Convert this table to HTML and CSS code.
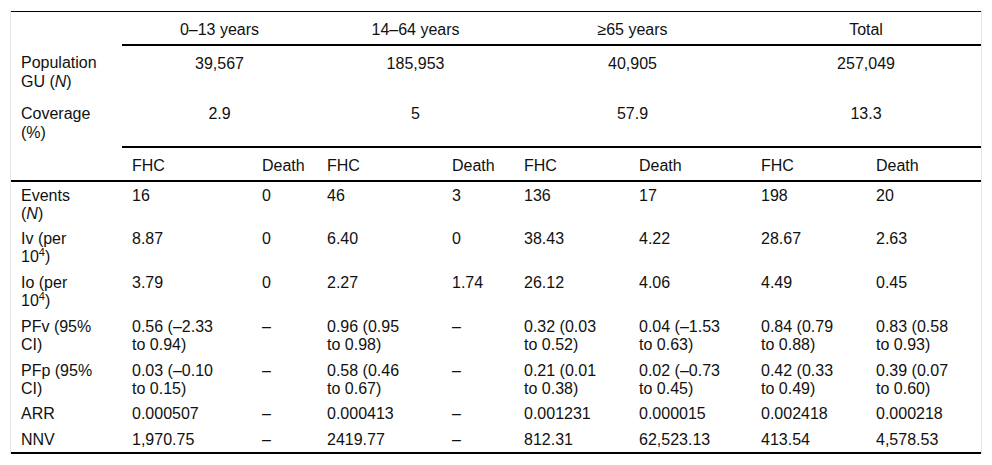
FILE: index.html
```html
<!DOCTYPE html>
<html lang="en">
<head>
<meta charset="utf-8">
<title>Table</title>
<link rel="stylesheet" href="styles.css">
</head>
<body>
<div class="wrap">
<table class="data">
<colgroup>
<col class="c0"><col class="c1"><col class="c2"><col class="c3"><col class="c4"><col class="c5"><col class="c6"><col class="c7"><col class="c8">
</colgroup>
<thead>
<tr class="group">
<th class="stub"></th>
<th colspan="2">0–13 years</th>
<th colspan="2">14–64 years</th>
<th colspan="2">≥65 years</th>
<th colspan="2">Total</th>
</tr>
<tr class="info">
<th class="stub">Population<br>GU (<i>N</i>)</th>
<td colspan="2">39,567</td>
<td colspan="2">185,953</td>
<td colspan="2">40,905</td>
<td colspan="2">257,049</td>
</tr>
<tr class="info info-last">
<th class="stub">Coverage<br>(%)</th>
<td colspan="2">2.9</td>
<td colspan="2">5</td>
<td colspan="2">57.9</td>
<td colspan="2">13.3</td>
</tr>
<tr class="sub">
<th class="stub"></th>
<th>FHC</th><th>Death</th>
<th>FHC</th><th>Death</th>
<th>FHC</th><th>Death</th>
<th>FHC</th><th>Death</th>
</tr>
</thead>
<tbody>
<tr>
<th class="stub">Events<br>(<i>N</i>)</th>
<td>16</td><td>0</td><td>46</td><td>3</td><td>136</td><td>17</td><td>198</td><td>20</td>
</tr>
<tr>
<th class="stub">Iv (per<br>10<sup>4</sup>)</th>
<td>8.87</td><td>0</td><td>6.40</td><td>0</td><td>38.43</td><td>4.22</td><td>28.67</td><td>2.63</td>
</tr>
<tr>
<th class="stub">Io (per<br>10<sup>4</sup>)</th>
<td>3.79</td><td>0</td><td>2.27</td><td>1.74</td><td>26.12</td><td>4.06</td><td>4.49</td><td>0.45</td>
</tr>
<tr>
<th class="stub">PFv (95%<br>CI)</th>
<td>0.56 (–2.33<br>to 0.94)</td><td>–</td><td>0.96 (0.95<br>to 0.98)</td><td>–</td><td>0.32 (0.03<br>to 0.52)</td><td>0.04 (–1.53<br>to 0.63)</td><td>0.84 (0.79<br>to 0.88)</td><td>0.83 (0.58<br>to 0.93)</td>
</tr>
<tr>
<th class="stub">PFp (95%<br>CI)</th>
<td>0.03 (–0.10<br>to 0.15)</td><td>–</td><td>0.58 (0.46<br>to 0.67)</td><td>–</td><td>0.21 (0.01<br>to 0.38)</td><td>0.02 (–0.73<br>to 0.45)</td><td>0.42 (0.33<br>to 0.49)</td><td>0.39 (0.07<br>to 0.60)</td>
</tr>
<tr>
<th class="stub">ARR</th>
<td>0.000507</td><td>–</td><td>0.000413</td><td>–</td><td>0.001231</td><td>0.000015</td><td>0.002418</td><td>0.000218</td>
</tr>
<tr>
<th class="stub">NNV</th>
<td>1,970.75</td><td>–</td><td>2419.77</td><td>–</td><td>812.31</td><td>62,523.13</td><td>413.54</td><td>4,578.53</td>
</tr>
</tbody>
</table>
</div>
</body>
</html>
```

FILE: styles.css
```css
html, body {
  margin: 0;
  padding: 0;
  background: #fff;
}

body {
  font-family: "Liberation Sans", Arial, sans-serif;
  font-size: 16px;
  color: #111;
}

.wrap {
  margin: 11px 0 0 10px;
  width: 970px;
  border-left: 1px solid #e6e6e6;
  border-right: 1px solid #e6e6e6;
}

.data {
  width: 970px;
  table-layout: fixed;
  border-collapse: collapse;
  border-top: 1px solid #000;
  border-bottom: 2px solid #000;
}

.c0 { width: 111px; }
.c1 { width: 130px; }
.c2 { width: 65px; }
.c3 { width: 125px; }
.c4 { width: 72px; }
.c5 { width: 115px; }
.c6 { width: 122px; }
.c7 { width: 115px; }
.c8 { width: 115px; }

.data th,
.data td {
  font-weight: normal;
  text-align: left;
  vertical-align: top;
}

.data thead {
  line-height: 19px;
}

.data thead th,
.data thead td {
  padding: 8px 10px 5px;
}

.data tbody {
  line-height: 18px;
}

.data tbody th,
.data tbody td {
  padding: 4.5px 10px 3.25px;
}

.group th,
.info td {
  text-align: center;
}

.group th:not(.stub),
.info-last td,
.sub th {
  border-bottom: 2px solid #000;
}

.data sup {
  font-size: 11px;
  line-height: 0;
  vertical-align: 6px;
}
```
